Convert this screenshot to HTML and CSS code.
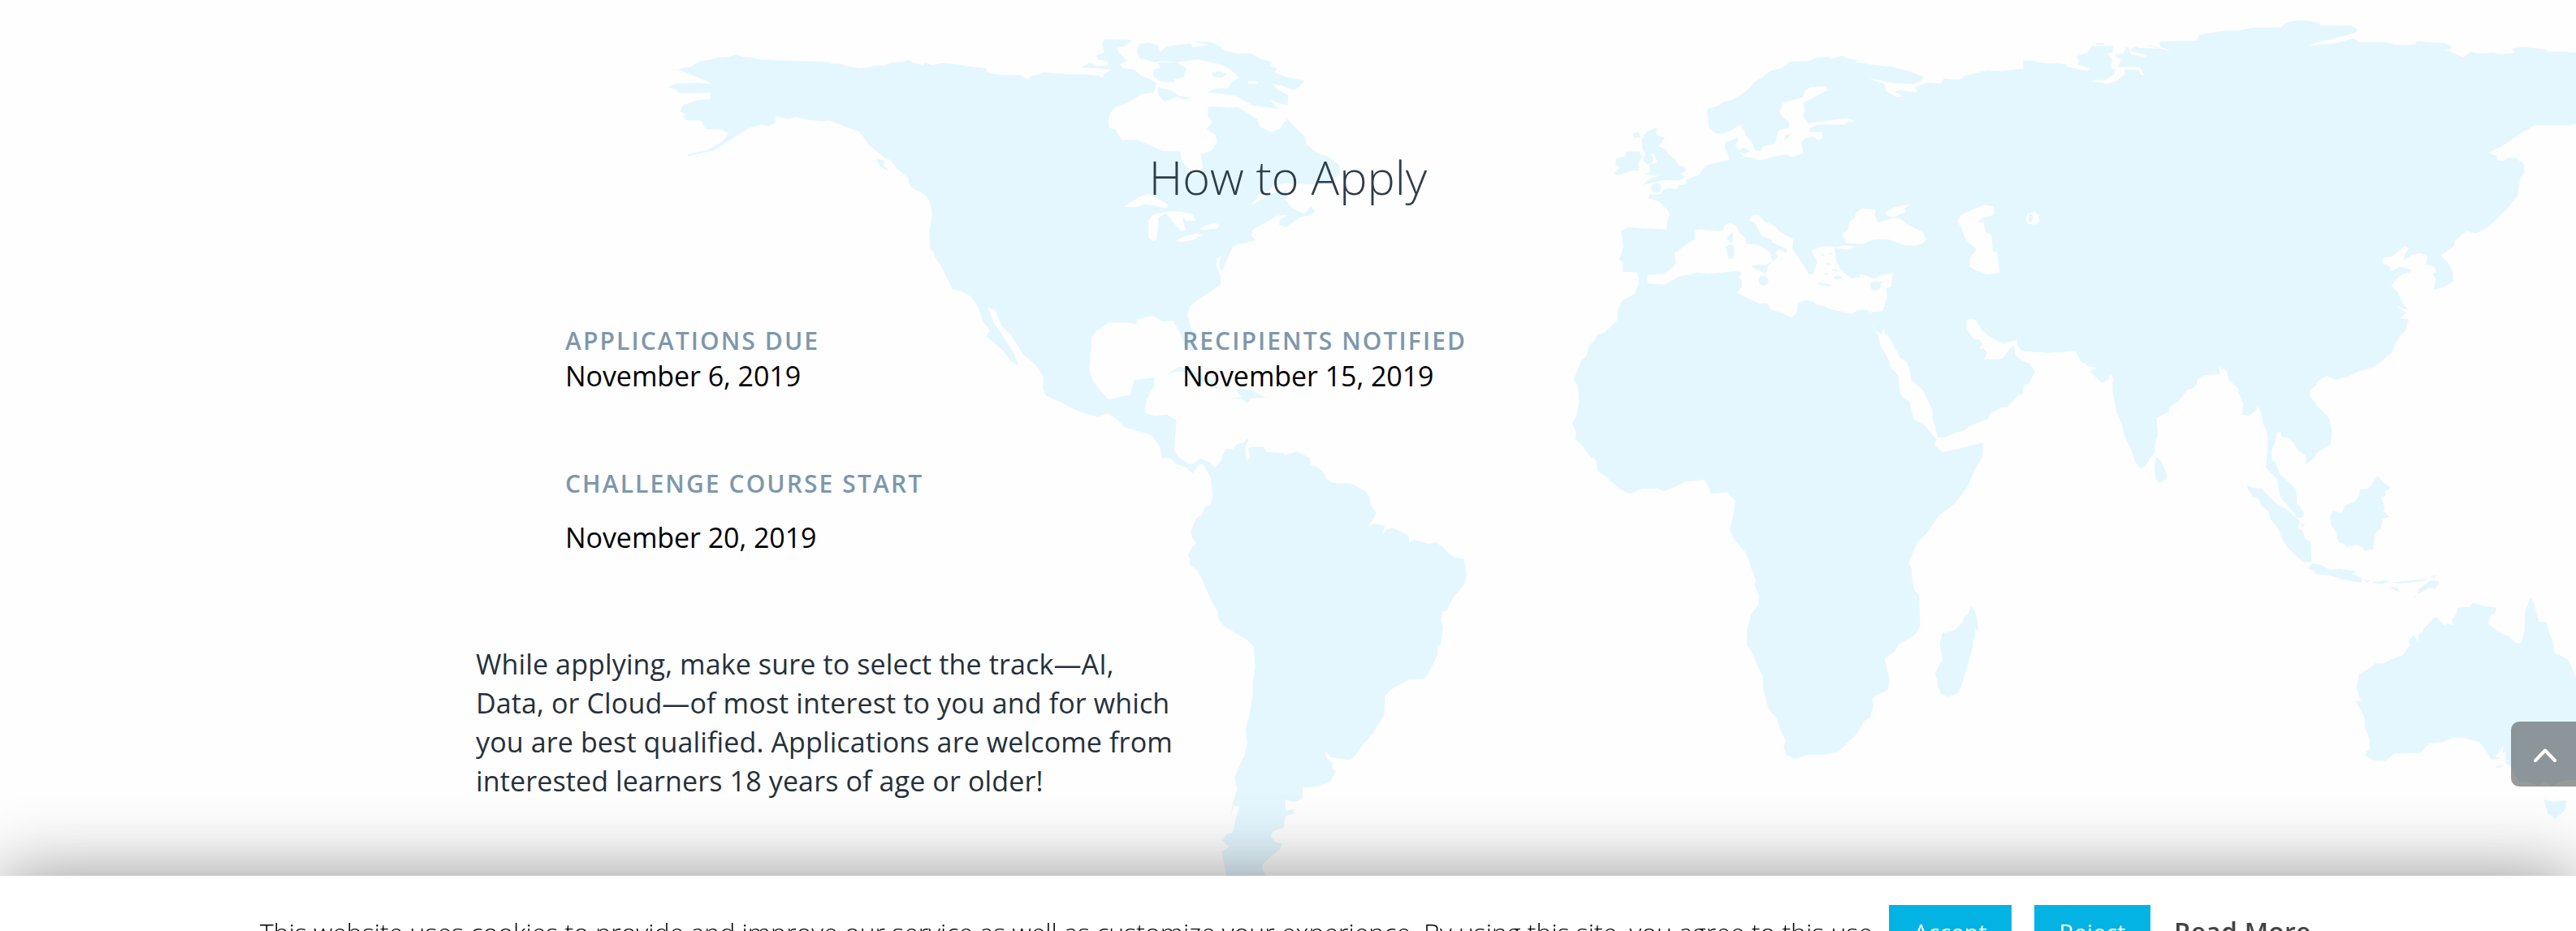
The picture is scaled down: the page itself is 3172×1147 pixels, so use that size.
FILE: index.html
```html
<!DOCTYPE html>
<html lang="en">
<head>
<meta charset="utf-8">
<title>How to Apply</title>
<link rel="stylesheet" href="styles.css">
</head>
<body>
<main class="apply">
  <svg class="map" viewBox="0 0 3172 1147" aria-hidden="true">
    <!-- North America -->
    <g transform="translate(800 0) scale(.57398 .35714)">
      <path class="land" d="M60 240L75 232 88 232 105 212 125 208 145 198 170 196 185 188 200 196 215 196 235 205 330 211 385 214 390 220 410 220 420 226 450 236 475 232 480 226 500 226 520 215 545 213 555 206 565 216 580 222 585 228 592 215 605 225 630 218 660 222 680 228 700 232 722 236 722 246 732 254 760 258 795 258 812 276 820 262 830 258 845 250 865 252 900 256 930 256 960 260 972 268 975 255 990 240 960 236 922 233 945 218 960 228 985 225 980 212 962 205 958 192 975 182 970 150 975 135 1035 138 1020 158 1003 165 1008 185 1025 210 1008 222 1015 235 1040 240 1055 262 1080 278 1088 290 1080 320 1055 325 1030 350 1000 370 988 390 984 415 985 440 1000 448 1012 482 1045 482 1075 503 1100 520 1138 522 1143 560 1155 580 1160 602 1180 600 1187 575 1182 532 1205 520 1217 490 1213 465 1195 445 1207 420 1197 400 1198 368 1225 368 1240 372 1262 368 1280 388 1303 410 1310 438 1332 455 1352 445 1358 428 1368 410 1385 440 1405 470 1410 500 1430 525 1455 540 1480 570 1480 600 1462 630 1430 636 1362 633 1337 640 1330 655 1310 670 1290 708 1330 672 1345 662 1367 655 1365 690 1378 718 1405 738 1418 712 1428 728 1420 742 1395 750 1365 785 1350 775 1352 758 1370 740 1345 745 1320 770 1295 790 1290 810 1300 830 1260 843 1250 853 1240 890 1227 938 1222 920 1225 882 1217 892 1215 915 1224 950 1225 980 1205 1005 1180 1030 1160 1055 1153 1085 1160 1125 1170 1170 1166 1215 1150 1200 1138 1150 1122 1105 1100 1108 1080 1090 1045 1102 1045 1120 1025 1112 985 1112 960 1140 948 1165 948 1190 943 1270 950 1310 965 1345 985 1380 1015 1368 1030 1365 1040 1310 1083 1303 1082 1335 1067 1370 1060 1430 1085 1438 1110 1432 1130 1450 1128 1500 1124 1580 1098 1580 1095 1540 1075 1497 1020 1475 1005 1450 983 1425 960 1438 915 1415 880 1385 850 1365 843 1338 845 1300 828 1260 800 1220 775 1155 755 1125 742 1072 725 1060 738 1112 762 1170 780 1215 792 1262 775 1245 757 1208 722 1160 730 1140 715 1110 705 1060 690 1025 670 1005 650 998 635 950 625 918 613 890 608 865 602 862 600 800 606 740 602 700 595 680 580 660 560 645 555 615 530 580 515 545 475 500 450 455 405 428 385 415 370 418 335 412 315 403 300 410 270 402 270 425 255 435 240 430 215 440 175 480 140 517 80 540 85 530 120 520 155 490 170 460 155 448 120 445 115 430 110 415 80 415 70 402 80 395 65 385 72 362 105 345 130 342 130 320 65 322 55 308 38 300 60 288 100 285 135 290 115 275 95 262Z"/>
      <path class="land" d="M1045 180L1050 152 1070 146 1090 156 1095 180 1108 160 1160 150 1165 163 1200 155 1165 145 1200 144 1215 152 1235 175 1260 185 1290 185 1310 202 1335 215 1330 228 1345 235 1340 250 1365 265 1405 278 1395 298 1382 312 1355 295 1335 290 1350 312 1370 328 1368 365 1330 345 1350 375 1295 365 1255 330 1195 318 1215 305 1240 305 1250 280 1265 268 1255 252 1230 225 1205 215 1175 205 1130 215 1100 210 1080 215 1065 205 1052 202Z"/>
      <path class="land" d="M1090 215L1130 215 1152 235 1145 268 1125 272 1125 285 1095 280 1080 262 1082 240 1095 235ZM1090 300L1120 312 1135 330 1165 340 1145 342 1130 335 1105 350 1092 330ZM1205 252L1220 245 1238 255 1228 268 1210 266Z"/>
      <path class="land" d="M555 620L595 645 620 670 625 695 600 670 570 655ZM485 548L503 552 502 570 515 592 495 575ZM445 438L470 462 490 500 520 540 528 560 505 545 470 500Z"/>
      <path class="land" d="M1110 1290L1135 1265 1165 1275 1190 1300 1220 1325 1200 1330 1165 1300 1140 1280ZM1200 1335L1235 1335 1225 1342 1205 1340ZM1255 1342L1290 1345 1322 1372 1290 1375 1283 1390 1270 1377 1243 1375 1270 1370Z"/>
      <path class="sea" d="M1017 714L1050 680 1070 668 1090 685 1112 705 1110 718 1080 710 1060 705 1045 714ZM1070 762L1080 740 1110 730 1140 730 1165 740 1172 762 1150 762 1142 745 1150 795 1140 798 1125 770 1108 735 1092 750 1088 825 1080 832 1070 820ZM1128 830L1150 815 1175 805 1185 812 1165 828 1140 835ZM1178 790L1190 780 1212 768 1222 775 1218 788 1185 793ZM1282 280L1306 282 1302 290 1285 290Z"/>
    </g>
    <!-- Central and South America -->
    <g transform="translate(1250 480) scale(.44643 .39541)">
      <path class="land" d="M370 -5L371 18 360 30 358 72 385 82 420 78 443 100 438 150 435 180 450 210 480 232 493 230 510 215 535 225 553 243 570 218 572 205 580 185 600 185 612 170 630 165 640 152 645 160 635 175 636 200 640 222 647 210 643 182 655 178 685 178 693 195 740 198 745 205 775 193 812 212 815 235 835 240 857 265 855 275 875 290 925 292 965 315 978 335 980 360 997 385 985 408 970 430 990 418 1020 425 1013 450 1025 435 1042 430 1085 455 1087 478 1100 468 1140 480 1160 476 1180 490 1195 510 1212 522 1238 528 1246 575 1240 605 1210 645 1190 690 1180 690 1175 715 1180 745 1173 795 1165 800 1166 825 1142 880 1128 902 1085 905 1035 935 1020 955 1018 1015 1000 1045 990 1068 960 1105 935 1145 920 1155 870 1145 855 1125 858 1145 877 1165 873 1178 885 1190 870 1220 835 1237 793 1240 792 1275 770 1285 745 1278 747 1312 768 1308 768 1320 745 1330 740 1365 712 1375 705 1390 715 1408 735 1415 732 1430 700 1460 682 1480 682 1495 692 1515 695 1568 590 1568 580 1500 570 1440 590 1425 572 1405 582 1385 600 1380 608 1340 618 1300 603 1296 595 1330 600 1290 612 1245 605 1210 625 1155 632 1145 640 1100 635 1060 645 1020 655 955 655 910 662 865 658 800 640 780 580 740 562 718 558 690 540 655 515 590 500 560 480 545 482 525 477 515 487 492 500 478 487 460 485 440 500 400 515 390 522 368 540 355 545 335 540 275 525 245 520 232 505 235 490 262 470 242 445 232 430 215 405 205 400 180 375 140 340 130 300 115 280 88 262 72 245 72 225 85 150 55 130 37 110 30 75 -5 228 -5 238 18 262 32 300 20 318 18 322 -5Z"/>
    </g>
    <!-- Europe, Middle East, northern Africa -->
    <g transform="translate(1900 0) scale(.40816 .35714)">
      <path class="land" d="M495 375L530 365 545 350 565 348 600 325 620 308 635 285 660 268 685 245 720 235 745 213 800 210 825 200 860 195 870 203 905 192 915 200 955 207 940 213 1000 225 1055 230 1110 248 1148 265 1140 280 1115 290 1060 287 985 270 1000 278 1030 290 1035 315 1070 335 1088 332 1060 318 1075 310 1125 318 1130 310 1120 303 1160 285 1200 288 1210 270 1240 275 1265 272 1270 262 1340 243 1380 245 1440 238 1475 238 1500 235 1465 212 1510 217 1580 222 1580 1213 1520 1217 1445 1210 1430 1190 1430 1172 1390 1185 1345 1160 1325 1140 1305 1103 1290 1100 1278 1105 1278 1135 1300 1170 1318 1172 1325 1185 1315 1205 1328 1200 1340 1215 1332 1240 1385 1238 1400 1215 1420 1190 1425 1225 1445 1245 1465 1252 1485 1280 1465 1325 1450 1328 1447 1360 1435 1362 1400 1405 1385 1405 1350 1425 1342 1445 1290 1468 1265 1488 1250 1490 1215 1508 1190 1510 1183 1470 1175 1445 1175 1415 1145 1345 1110 1310 1105 1270 1095 1245 1078 1235 1040 1155 1028 1150 1033 1120 1022 1155 1005 1140 988 1105 1010 1155 1020 1195 1045 1245 1047 1265 1072 1295 1078 1360 1103 1390 1118 1445 1145 1465 1187 1515 1175 1535 1190 1545 1205 1560 1240 1552 1325 1528 1325 1580 145 1580 120 1540 98 1515 100 1490 88 1460 98 1450 110 1400 105 1330 92 1310 105 1275 115 1245 130 1230 140 1190 155 1175 165 1152 185 1148 225 1103 225 1070 240 1035 275 1015 290 975 285 940 240 937 242 905 230 895 243 850 235 795 260 785 310 788 372 792 377 755 382 740 375 720 365 715 352 695 318 685 320 670 355 670 362 655 380 648 402 653 410 640 430 635 433 618 470 605 490 572 525 560 562 553 555 520 548 510 550 490 580 480 588 470 590 485 580 500 590 520 605 540 635 545 655 552 680 545 735 532 750 542 785 530 780 490 790 478 815 470 832 485 843 475 840 455 800 455 808 440 830 430 910 430 920 420 945 418 915 408 800 425 785 402 790 380 785 355 860 310 850 298 805 300 790 315 785 335 725 355 713 385 720 400 745 425 740 440 710 450 700 495 665 505 658 520 640 520 630 490 610 465 608 450 595 430 575 445 540 462 520 460 500 440Z"/>
      <path class="land" d="M298 480L315 452 345 440 340 465 368 475 348 505 370 515 380 535 400 550 410 572 430 578 430 590 415 600 430 612 410 622 365 622 300 637 325 615 350 607 308 600 325 592 320 568 345 560 335 530 310 535 300 515ZM222 545L248 540 250 522 290 523 300 540 288 560 290 588 265 590 225 605 215 597 232 580 218 565ZM270 462L288 455 295 475 275 475ZM726 488L732 465 750 462 735 480ZM585 520L605 510 625 520 610 532Z"/>
      <ellipse class="land" cx="318" cy="549" rx="15" ry="17"/>
      <ellipse class="land" cx="341" cy="648" rx="15" ry="17"/>
      <path class="sea" d="M315 948L365 945 390 925 402 905 397 875 430 845 458 825 458 795 475 790 500 795 540 797 550 775 565 768 583 780 590 800 610 820 615 842 650 845 685 870 692 900 670 915 645 912 627 920 672 945 680 915 710 885 700 870 712 860 735 872 735 858 690 835 690 825 660 815 640 770 622 760 630 742 648 740 670 765 700 780 712 798 755 825 753 860 780 905 795 930 800 945 815 948 822 920 828 905 810 865 840 850 878 850 885 900 895 925 910 943 930 960 952 958 960 945 1000 962 1020 950 1055 943 1050 990 1035 995 1038 1025 1025 1073 985 1078 975 1068 950 1070 930 1082 860 1065 855 1058 820 1048 820 1042 795 1035 770 1045 765 1080 750 1097 725 1080 690 1070 675 1045 655 1048 620 1030 585 1010 600 990 600 965 590 955 600 940 580 935 500 945 465 940 410 955 365 982 315 978ZM903 810L920 790 925 765 940 750 945 730 965 718 1005 725 1000 740 1010 768 1060 752 1080 755 1100 775 1145 800 1156 825 1145 840 1125 847 1095 847 1040 825 1000 825 965 842 915 838ZM1033 732L1060 715 1110 705 1090 718 1095 732 1075 740 1060 750 1038 745ZM875 855L910 847 945 850 915 860ZM1250 765L1260 742 1300 722 1330 707 1360 712 1360 742 1330 748 1310 765 1330 768 1335 800 1353 810 1357 868 1370 870 1378 940 1340 947 1310 935 1287 920 1288 890 1308 860 1275 825 1262 785Z"/>
      <path class="land" d="M555 820L572 800 573 830 565 840ZM550 850L570 842 577 855 575 890 560 893ZM828 975L875 983 860 988 828 980ZM835 880L845 875 850 885ZM850 910L865 905 870 915ZM860 870L872 872 868 882ZM845 945L855 940 862 950ZM870 930L885 928 890 938ZM875 955L890 950 905 960 885 965Z"/>
      <ellipse class="land" cx="665" cy="968" rx="15" ry="17"/>
      <ellipse class="land" cx="1003" cy="986" rx="16" ry="16"/>
      <path class="land" d="M1005 975L1028 970 1016 982Z"/>
    </g>
    <!-- Southern Africa and Madagascar -->
    <g transform="translate(1900 500) scale(.40816 .33333)">
      <path class="land" d="M110 -20L100 40 88 65 102 98 98 125 125 145 145 180 160 205 165 240 185 258 235 310 263 325 300 307 345 305 365 315 415 290 430 280 485 273 498 295 505 323 520 325 555 318 580 350 575 400 568 435 562 455 575 490 610 540 622 575 630 605 643 645 638 662 652 700 650 735 640 750 628 770 615 830 615 885 630 910 645 955 662 995 664 1045 670 1070 680 1120 705 1155 715 1195 733 1240 725 1260 735 1290 760 1305 800 1290 845 1290 890 1278 945 1215 970 1165 988 1150 998 1105 992 1085 1005 1070 1040 1050 1045 1010 1030 935 1060 908 1075 880 1120 850 1138 815 1135 700 1120 680 1113 640 1113 605 1103 580 1130 505 1155 475 1195 405 1240 365 1280 300 1300 240 1325 190 1328 137 1300 148 1240 162 1205 172 1180 145 1187 125 1150 70 1118 50 1105 -20ZM1292 738L1305 765 1315 830 1305 825 1303 855 1297 870 1297 890 1270 1005 1255 1060 1222 1077 1200 1062 1190 1035 1190 1015 1183 990 1205 935 1197 880 1205 840 1240 830 1265 800 1270 780 1282 770Z"/>
    </g>
    <!-- Asia, Indonesia, Australia -->
    <g transform="translate(2500 0) scale(.42857 .35714)">
      <path class="land" d="M-20 208L10 210 30 218 80 220 105 230 165 245 170 235 135 222 140 210 132 195 165 180 178 158 235 158 265 165 345 155 368 165 405 178 375 160 370 148 380 143 480 140 485 120 560 105 600 105 640 95 720 95 735 78 770 70 805 73 830 80 835 88 920 88 940 100 935 112 910 122 820 148 800 158 870 150 930 132 945 145 1020 145 1050 155 1105 155 1112 143 1160 147 1190 148 1210 160 1208 172 1192 172 1245 198 1265 178 1285 185 1330 182 1355 187 1392 182 1382 168 1415 162 1480 170 1490 178 1530 178 1580 182 1580 425 1550 432 1500 432 1450 432 1410 460 1355 505 1315 528 1340 537 1342 552 1360 555 1375 543 1395 545 1418 565 1420 595 1408 615 1400 675 1370 720 1315 785 1280 805 1262 800 1255 795 1220 830 1217 850 1180 880 1185 890 1200 905 1213 935 1215 970 1190 990 1158 1000 1165 965 1157 942 1167 938 1160 920 1135 912 1142 885 1120 873 1095 880 1075 897 1075 880 1088 857 1075 848 1040 885 1015 890 1010 905 1032 915 1037 935 1062 920 1095 930 1092 940 1070 945 1050 965 1037 988 1055 1005 1068 1045 1083 1062 1080 1080 1062 1097 1088 1102 1078 1140 1065 1155 1045 1195 1040 1215 990 1265 940 1283 918 1297 878 1310 850 1298 825 1315 820 1330 805 1345 803 1365 825 1400 860 1445 867 1500 862 1535 825 1560 815 1580 792 1603 790 1570 770 1553 755 1525 738 1510 722 1508 720 1490 708 1492 705 1520 693 1555 694 1588 703 1592 720 1640 745 1665 765 1690 766 1735 787 1770 782 1785 765 1787 757 1768 725 1725 715 1700 710 1655 677 1612 683 1535 680 1490 668 1460 665 1430 655 1402 645 1420 628 1435 608 1430 612 1395 605 1370 597 1355 597 1340 570 1310 565 1280 550 1272 545 1290 500 1295 480 1310 478 1325 465 1342 450 1345 425 1385 400 1405 398 1420 380 1430 363 1442 367 1500 358 1530 358 1560 345 1580 330 1610 315 1615 300 1590 295 1565 270 1500 262 1460 247 1420 240 1370 235 1340 238 1305 230 1290 225 1310 205 1320 170 1280 192 1270 170 1265 145 1245 130 1210 50 1216 -20 1212Z"/>
      <path class="sea" d="M222 186L238 178 238 155 262 155 275 168 265 185 240 190 260 205 252 230 315 232 328 260 318 260 312 240 270 240 272 255 250 278 225 288 178 282 180 276 215 276 242 255 245 242 233 235 235 205ZM280 160L300 160 285 175 338 192 330 196 290 188ZM298 150L345 158 370 168 310 165ZM542 1260L548 1275 558 1270 560 1300 545 1300ZM1050 1055L1085 1070 1080 1078ZM1015 892L1035 885 1045 930 1032 918 1015 910Z"/>
      <!-- Aral Sea -->
      <path class="sea" d="M-13 755L-7 738 6 730 8 738 14 728 18 740 25 738 24 752 28 762 18 774 -7 773Z"/>
      <path class="land" d="M1 738L8 746 6 758 0 768 -5 766 -3 745Z"/>
      <path class="land" d="M190 150L208 148 215 153 190 155ZM362 1575L375 1590 393 1635 390 1655 370 1667 360 1650 357 1610ZM622 1673L640 1683 665 1685 680 1705 705 1735 735 1755 757 1778 775 1800 768 1820 782 1832 790 1858 805 1870 808 1938 800 1940 785 1940 740 1890 722 1858 715 1830 690 1790 685 1765 665 1745 655 1720 640 1715 625 1685ZM775 1805L790 1808 782 1820ZM810 1943L835 1948 858 1965 890 1962 940 1972 925 1978 955 1995 950 2010 900 2000 860 1985 820 1980 815 1968 797 1962ZM955 2000L975 2002 970 2010ZM980 2008L1015 2003 1035 2003 1010 2015 985 2012ZM1040 2010L1075 2005 1140 1998 1130 2004 1060 2014ZM1035 2025L1055 2028 1063 2043 1040 2033ZM1112 2050L1118 2030 1150 2003 1175 2003 1165 2030 1145 2028 1130 2040ZM1150 1988L1168 1984 1160 1994ZM1100 2058L1108 2054 1104 2062ZM998 1640L1015 1665 1037 1683 1018 1695 1022 1710 1008 1715 1018 1750 1015 1765 1032 1783 1012 1790 1008 1822 990 1840 985 1895 960 1900 955 1885 935 1880 910 1888 900 1875 885 1870 878 1835 865 1812 860 1785 870 1760 895 1770 905 1743 930 1732 945 1710 948 1688 972 1685 990 1655Z"/>
      <path class="land" d="M1437 2060L1448 2085 1462 2145 1482 2145 1490 2180 1502 2215 1505 2250 1545 2275 1555 2300 1565 2332 1580 2340 1580 2690 1560 2690 1530 2692 1500 2712 1478 2695 1460 2710 1430 2698 1405 2698 1390 2670 1378 2640 1365 2635 1365 2590 1350 2615 1325 2622 1310 2590 1290 2560 1240 2543 1215 2545 1185 2560 1145 2565 1120 2598 1045 2600 1020 2625 985 2623 965 2608 965 2592 976 2585 975 2550 962 2510 962 2480 945 2440 935 2420 950 2418 937 2375 945 2325 975 2305 990 2288 1015 2288 1035 2275 1070 2260 1090 2228 1087 2210 1103 2190 1115 2215 1115 2188 1128 2180 1130 2168 1150 2145 1158 2132 1170 2130 1190 2158 1200 2150 1215 2158 1212 2140 1225 2115 1228 2097 1265 2092 1270 2080 1305 2090 1340 2095 1335 2115 1325 2120 1315 2150 1345 2180 1375 2195 1395 2218 1410 2218 1420 2180 1422 2110ZM1475 2757L1505 2766 1540 2760 1537 2795 1508 2825 1487 2805ZM1337 2643L1360 2640 1350 2648 1338 2648Z"/>
      <path class="sea" d="M1335 2612L1350 2590 1358 2572 1358 2595 1366 2630 1342 2632 1355 2612Z"/>
    </g>
  </svg>

  <section class="content">
    <h2 class="title">How to Apply</h2>
    <dl class="dates">
      <div class="date">
        <dt class="label">Applications due</dt>
        <dd class="value">November 6, 2019</dd>
      </div>
      <div class="date">
        <dt class="label">Recipients notified</dt>
        <dd class="value">November 15, 2019</dd>
      </div>
      <div class="date date-spaced">
        <dt class="label">Challenge course start</dt>
        <dd class="value">November 20, 2019</dd>
      </div>
    </dl>
    <p class="note">While applying, make sure to select the track—AI, Data, or Cloud—of most interest to you and for which you are best qualified. Applications are welcome from interested learners 18 years of age or older!</p>
  </section>
</main>

<button class="to-top" aria-label="Back to top">
  <svg class="chevron" viewBox="0 0 32 20" aria-hidden="true"><path d="M4 16L16 3.5L28 16"/></svg>
</button>

<footer class="cookies">
  <p class="cookie-text">This website uses cookies to provide and improve our service as well as customize your experience. By using this site, you agree to this use.</p>
  <a class="btn accept">Accept</a>
  <a class="btn reject">Reject</a>
  <a class="more">Read More</a>
</footer>
</body>
</html>
```
FILE: styles.css
```css
* { box-sizing: border-box; }

body {
  margin: 0;
  height: 1147px;
  overflow: hidden;
  background: #fefefe;
  font-family: "Open Sans", sans-serif;
}

.apply { position: relative; height: 1147px; }

.map {
  position: absolute;
  inset: 0;
  width: 3172px;
  height: 1147px;
}
.land { fill: #e4f7fe; }
.sea { fill: #fefefe; }

.content {
  position: relative;
  width: 2000px;
  margin: 0 auto;
  padding-top: 178px;
}

.title {
  margin: 0 0 142px;
  font-size: 57.6px;
  line-height: 80px;
  font-weight: 300;
  text-align: center;
  color: #2e3d49;
}

.dates {
  display: grid;
  grid-template-columns: 760px 760px;
  row-gap: 90px;
  margin: 0;
  padding-left: 110px;
}
.label {
  font-size: 30px;
  line-height: 40px;
  font-weight: 600;
  letter-spacing: 2.1px;
  text-transform: uppercase;
  color: #7d97ad;
}
.value {
  margin: 0;
  font-size: 34px;
  line-height: 46px;
  letter-spacing: -.06px;
  color: #000;
}
.date-spaced .value { margin-top: 23px; }

.note {
  width: 870px;
  margin: 109px 0 0;
  font-size: 34px;
  line-height: 48px;
  letter-spacing: .13px;
  color: #25303b;
}

.to-top {
  position: fixed;
  right: 0;
  top: 889px;
  display: flex;
  align-items: center;
  justify-content: center;
  width: 80px;
  height: 80px;
  padding: 3px 0 0 3px;
  border: 0;
  border-radius: 10px 0 0 10px;
  background: rgba(51, 51, 51, .5);
}
.chevron {
  width: 32px;
  height: 20px;
  fill: none;
  stroke: #fff;
  stroke-width: 4;
  stroke-linecap: round;
  stroke-linejoin: round;
}

.cookies {
  position: fixed;
  left: 0;
  right: 0;
  top: 1079px;
  display: flex;
  align-items: flex-start;
  height: 150px;
  padding: 36px 0 0 320px;
  background: #fff;
  box-shadow: 0 0 90px rgba(0, 0, 0, .43);
}
.cookie-text {
  width: 2006px;
  margin: 10px 0 0;
  font-size: 32px;
  line-height: 48px;
  font-weight: 300;
  white-space: nowrap;
  color: #000;
}
.btn {
  height: 70px;
  padding-top: 10px;
  background: #02b3e4;
  color: #fff;
  font-size: 29px;
  line-height: 48px;
  text-align: center;
}
.accept { width: 151px; margin-right: 28px; }
.reject { width: 143px; margin-right: 29px; }
.more {
  margin-top: 9px;
  font-size: 32px;
  line-height: 48px;
  font-weight: 600;
  letter-spacing: .2px;
  color: #444;
}
```
